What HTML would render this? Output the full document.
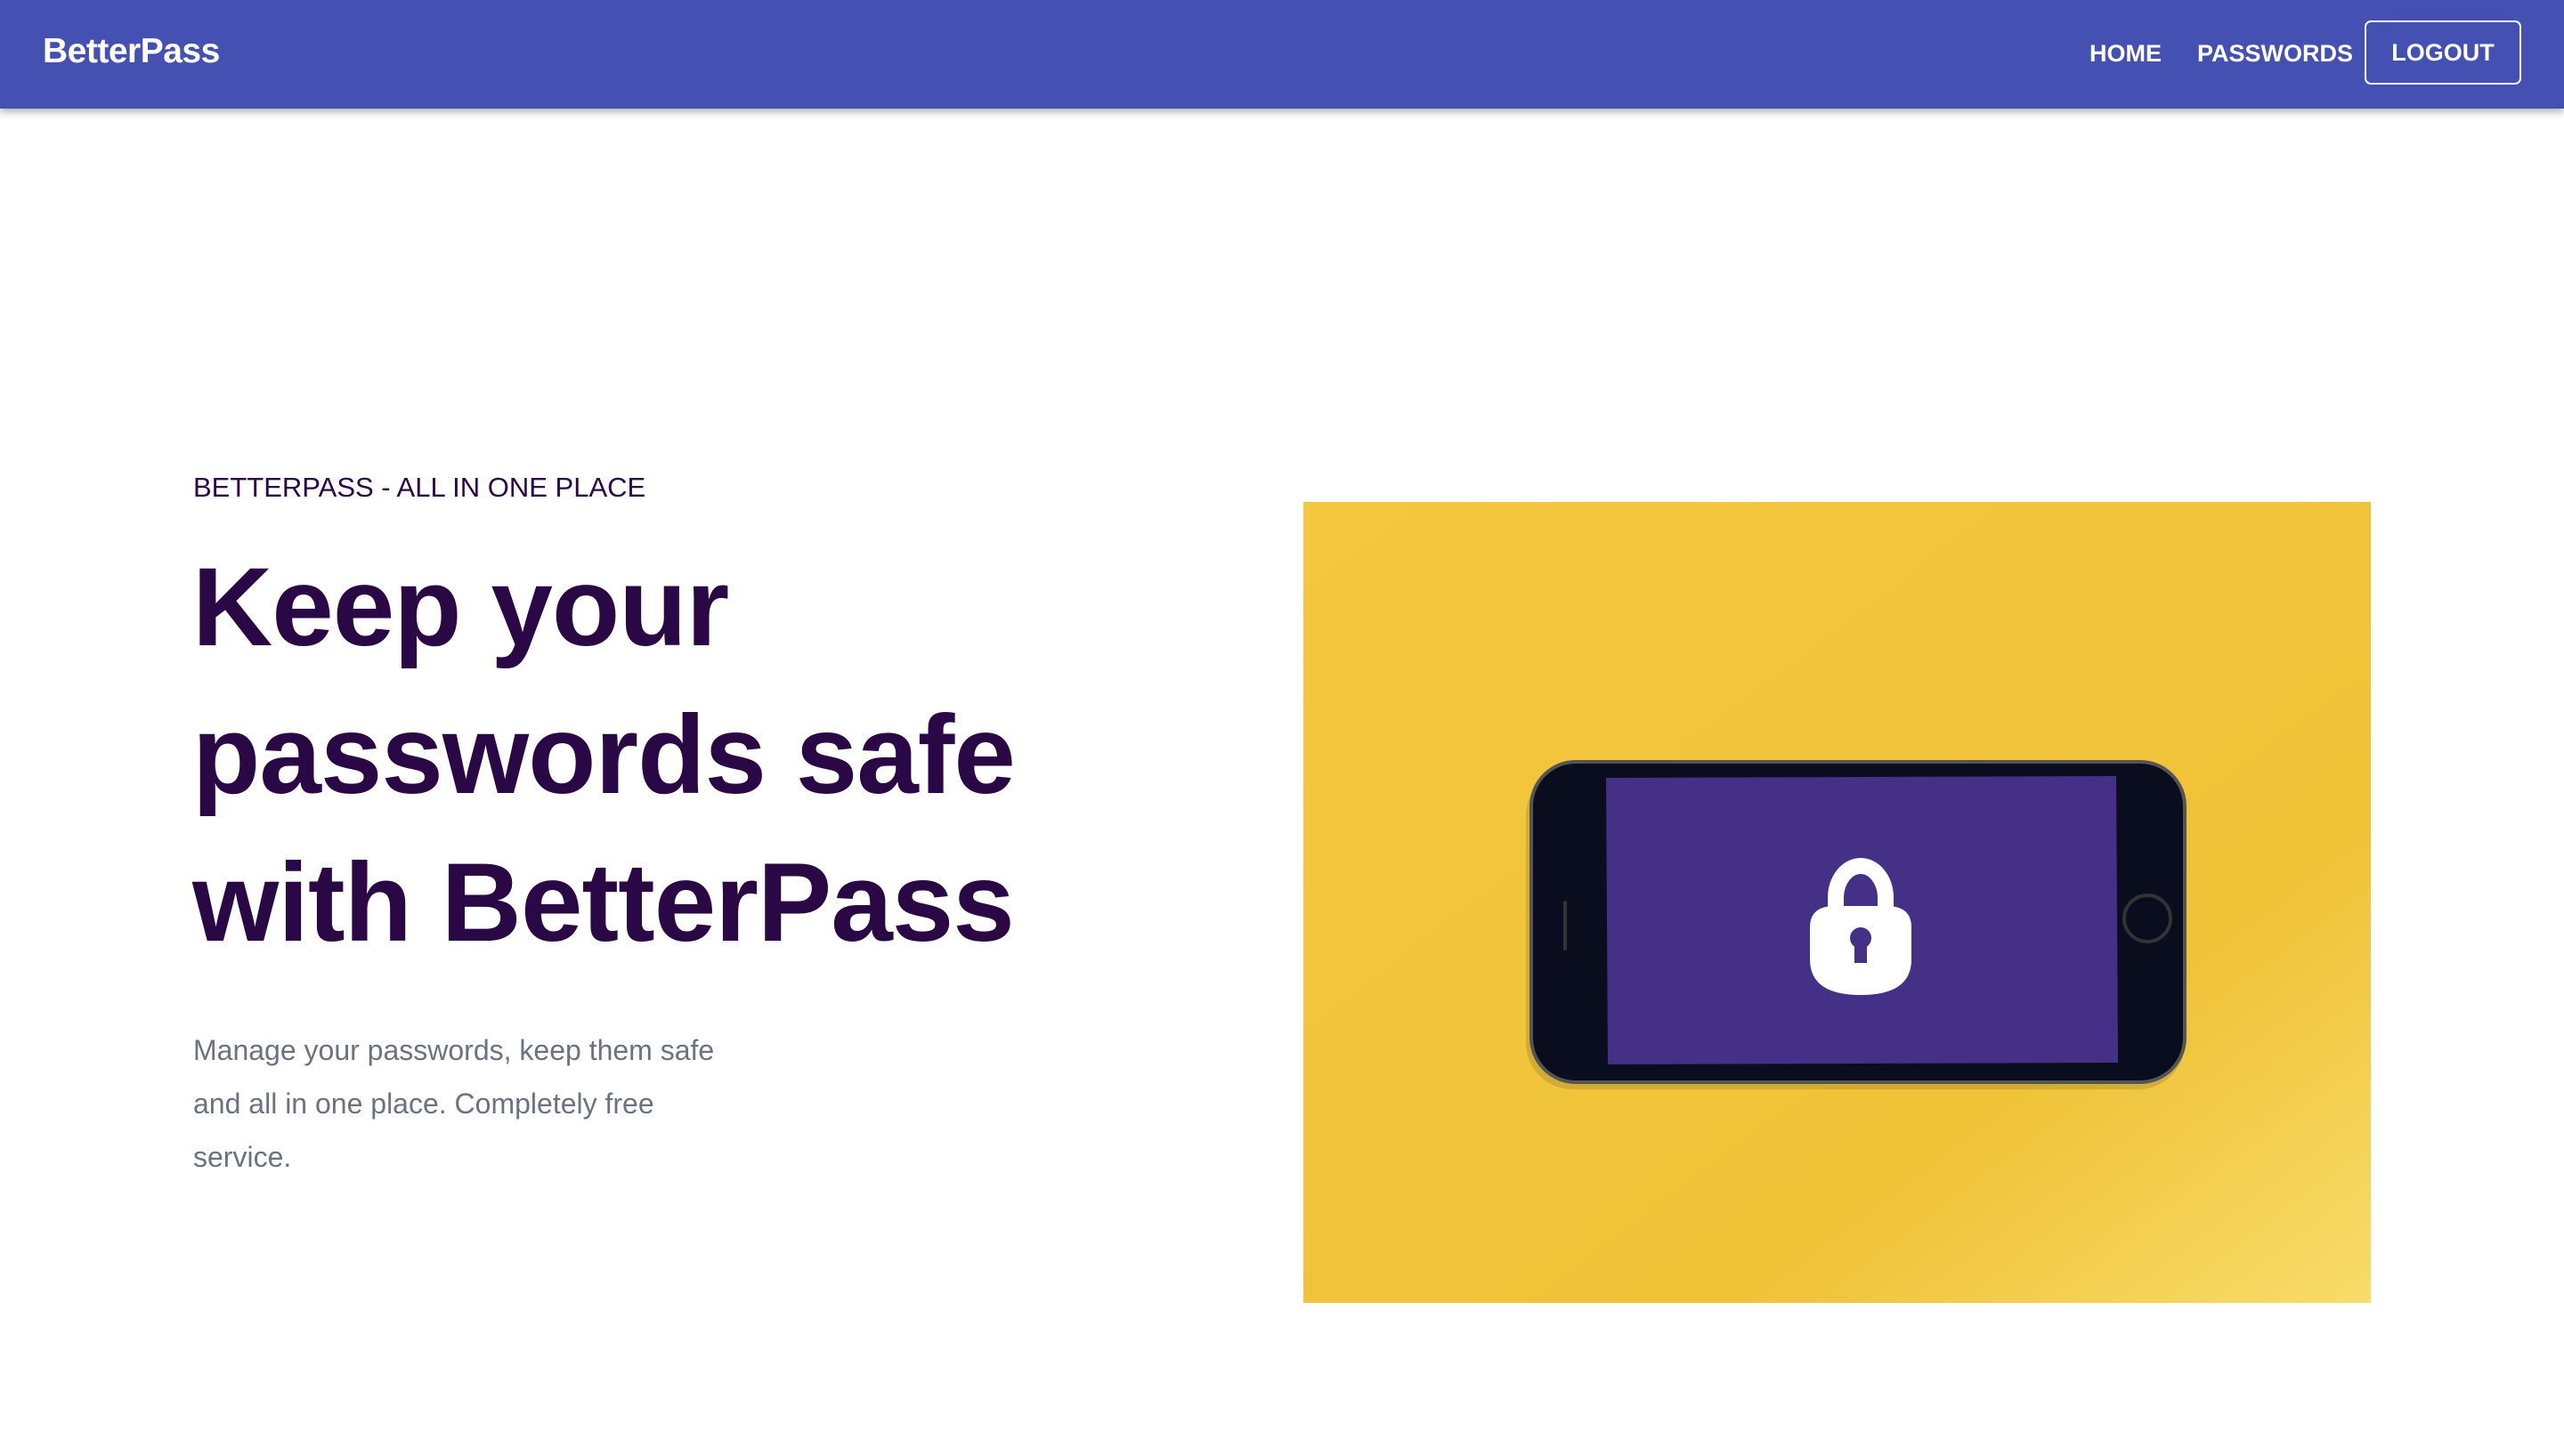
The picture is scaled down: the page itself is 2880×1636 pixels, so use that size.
<!DOCTYPE html>
<html><head><meta charset="utf-8"><style>
*{margin:0;padding:0;box-sizing:border-box}
body{width:2880px;height:1636px;background:#fff;position:relative;overflow:hidden;font-family:"Liberation Sans",sans-serif}
.nav{position:absolute;left:0;top:0;width:2880px;height:122px;background:#4451b2;box-shadow:0 4px 8px rgba(0,0,0,.3)}
.brand{position:absolute;left:48px;top:36px;color:#fff;font-size:39px;font-weight:bold;letter-spacing:-0.5px}
.nl{position:absolute;top:45px;color:#fff;font-size:27px;font-weight:bold}
.btn{position:absolute;left:2656px;top:23px;width:176px;height:72px;border:2px solid #fff;border-radius:7px;color:#fff;font-size:27px;font-weight:bold;text-align:center;line-height:68px}
.sub{position:absolute;left:217px;top:530px;color:#2a0845;font-size:31px;white-space:nowrap}
h1{position:absolute;left:216px;top:600px;color:#2a0845;font-size:125px;line-height:166px;font-weight:bold;letter-spacing:-1px;width:1200px}
p{position:absolute;left:217px;top:1150px;color:#6b7280;font-size:32px;line-height:60px;width:605px}
</style></head><body>
<div class="nav">
<div class="brand">BetterPass</div>
<div class="nl" style="left:2347px">HOME</div>
<div class="nl" style="left:2468px">PASSWORDS</div>
<div class="btn">LOGOUT</div>
</div>
<div class="sub">BETTERPASS - ALL IN ONE PLACE</div>
<h1>Keep your<br>passwords safe<br>with BetterPass</h1>
<p>Manage your passwords, keep them safe and all in one place. Completely free service.</p>
<svg style="position:absolute;left:1464px;top:564px" width="1199" height="900" viewBox="0 0 1199 900">
<defs><linearGradient id="g" x1="0" y1="0" x2="1" y2="1"><stop offset="0" stop-color="#f4c740"/><stop offset="0.7" stop-color="#efc238"/><stop offset="1" stop-color="#f8dc6a"/></linearGradient></defs>
<rect width="1199" height="900" fill="url(#g)"/>
<rect x="250" y="300" width="740" height="360" rx="52" fill="#000" opacity="0.12"/>
<rect x="256" y="292" width="734" height="360" rx="50" fill="#0a0d1e" stroke="#555" stroke-width="4"/>
<polygon points="340,310 913,308 915,630 342,632" fill="#453087"/>
<rect x="292" y="448" width="4" height="56" rx="2" fill="#333"/>
<circle cx="948" cy="468" r="26" fill="none" stroke="#333" stroke-width="4"/>
<path d="M598,460 v-15 a28,36 0 0 1 56,0 v15" fill="none" stroke="#fff" stroke-width="18"/>
<path d="M569,478 q0,-24 28,-24 h58 q28,0 28,24 v36 q0,40 -57,40 q-57,0 -57,-40 z" fill="#fff"/>
<circle cx="626" cy="490" r="12" fill="#453087"/>
<rect x="619" y="494" width="14" height="24" fill="#453087"/>
</svg>
</body></html>
